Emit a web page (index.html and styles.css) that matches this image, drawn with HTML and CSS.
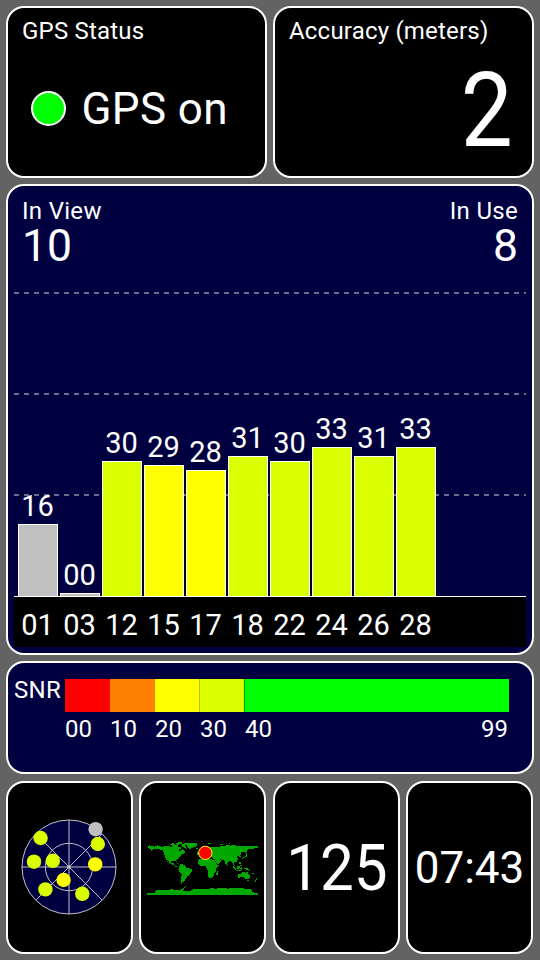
FILE: index.html
```html
<!DOCTYPE html>
<html lang="en">
<head>
<meta charset="utf-8">
<title>GPS Status</title>
<link rel="stylesheet" href="styles.css">
</head>
<body>
<main class="screen">
  <div class="row top">
    <section class="card">
      <h2 class="label">GPS Status</h2>
      <div class="status"><span class="led"></span><span class="status-text">GPS on</span></div>
    </section>
    <section class="card">
      <h2 class="label wide">Accuracy (meters)</h2>
      <div class="accuracy">2</div>
    </section>
  </div>

  <section class="card navy satellites">
    <div class="counts">
      <div><h2 class="count-label">In View</h2><div class="count">10</div></div>
      <div class="right"><h2 class="count-label">In Use</h2><div class="count">8</div></div>
    </div>
    <div class="chart">
      <svg class="grid" viewBox="0 0 512 304" width="512" height="304" aria-hidden="true">
        <path d="M0 1H512M0 102H512M0 203H512"/>
      </svg>
      <div class="bars">
        <div class="col"><span>16</span><i class="bar gray" style="height:72px"></i></div>
        <div class="col"><span>00</span><i class="bar gray" style="height:3px"></i></div>
        <div class="col"><span>30</span><i class="bar lime" style="height:135px"></i></div>
        <div class="col"><span>29</span><i class="bar yellow" style="height:131px"></i></div>
        <div class="col"><span>28</span><i class="bar yellow" style="height:126px"></i></div>
        <div class="col"><span>31</span><i class="bar lime" style="height:140px"></i></div>
        <div class="col"><span>30</span><i class="bar lime" style="height:135px"></i></div>
        <div class="col"><span>33</span><i class="bar lime" style="height:149px"></i></div>
        <div class="col"><span>31</span><i class="bar lime" style="height:140px"></i></div>
        <div class="col"><span>33</span><i class="bar lime" style="height:149px"></i></div>
      </div>
    </div>
    <div class="ids">
      <span>01</span><span>03</span><span>12</span><span>15</span><span>17</span><span>18</span><span>22</span><span>24</span><span>26</span><span>28</span>
    </div>
  </section>

  <section class="card navy snr">
    <div class="snr-label">SNR</div>
    <div class="scale">
      <div class="segments"><i class="red"></i><i class="orange"></i><i class="yellow"></i><i class="lime"></i><i class="green"></i></div>
      <div class="ticks"><span>00</span><span>10</span><span>20</span><span>30</span><span>40</span><span class="last">99</span></div>
    </div>
  </section>

  <div class="row bottom">
    <section class="card tile">
      <svg class="sky" viewBox="-48 -48 96 96" width="96" height="96" aria-label="Sky view">
        <circle r="47" fill="#000040"/>
        <g fill="none" stroke="#c0c0c8" stroke-width="1">
          <circle r="47"/><circle r="23.7"/>
          <path d="M-47 0H47M0 -47V47M-33 -33L33 33M33 -33L-33 33"/>
        </g>
        <circle r="1.8" fill="#c0c0c8"/>
        <g fill="#daff00">
          <circle cx="-28.4" cy="-29" r="7.2"/><circle cx="28.8" cy="-23" r="7.2"/>
          <circle cx="-35" cy="-5.3" r="7.2"/><circle cx="-16.2" cy="-6.2" r="7.2"/>
          <circle cx="-23.6" cy="22.4" r="7.2"/><circle cx="13.3" cy="26.8" r="7.2"/>
        </g>
        <g fill="#ffff00"><circle cx="26.2" cy="-2.6" r="7.2"/><circle cx="-5.4" cy="13" r="7.2"/></g>
        <circle cx="26.6" cy="-37.8" r="7.2" fill="#c0c0c0"/>
      </svg>
    </section>
    <section class="card tile">
      <svg class="map" viewBox="20 30 336 168" width="112" height="56" aria-label="World map">
        <g fill="#00a800">
          <path d="M21 48L26 46L44 50L52 46L64 50L78 48L92 50L108 48L114 52L122 50L124 54L116 58L118 64L126 58L132 64L137 66L133 70L124 73L120 78L115 82L108 90L109 97L105 94L94 93L92 97L95 101L101 99L101 104L107 108L114 112L106 110L97 105L88 99L82 91L77 86L73 78L72 70L68 62L58 58L48 58L40 58L32 65L34 60L26 56L24 52Z"/>
          <path d="M88 41L100 40L104 45L114 47L112 50L102 47L90 46ZM104 38L126 37L124 42L112 44ZM118 44L130 43L136 50L140 56L132 54L124 49Z"/>
          <path d="M130 40L146 38L166 39L172 42L167 50L158 52L151 56L147 57L142 51L139 44L131 44Z"/>
          <path d="M165 53L173 53L172 57L166 57ZM103 97L112 99L117 102L110 101Z"/>
          <path d="M118 104L124 102L134 106L138 113L148 115L155 119L155 124L150 129L149 135L142 138L139 145L133 149L132 155L126 157L126 164L121 163L121 152L123 141L124 134L117 126L114 119L117 112Z"/>
          <path d="M180 60L188 52L201 49L211 52L224 50L232 52L244 47L256 48L258 44L270 47L282 45L292 48L308 47L320 49L354 48L354 53L342 54L338 59L330 56L318 60L322 64L316 70L312 64L303 66L302 72L300 76L302 80L296 82L294 77L290 79L293 87L289 95L281 98L282 104L286 109L280 106L276 98L270 93L262 97L260 106L256 102L252 92L244 89L237 88L243 92L238 99L231 103L224 91L228 90L219 86L214 80L207 82L204 85L196 78L188 82L179 86L177 79L184 76L179 68Z"/>
          <path d="M179 87L195 84L198 88L212 88L223 91L230 104L236 104L234 110L227 117L226 127L221 132L219 140L211 144L205 143L202 132L203 122L198 113L195 107L184 108L177 106L172 99L173 92Z"/>
          <path d="M231 125L234 122L233 133L229 138L228 131ZM170 65H176V75H170ZM202 39L214 40L208 43L202 42ZM238 43L248 41L252 42L241 46ZM267 40L274 42L268 43ZM312 80L318 75L317 70L321 71L319 80L312 84L307 87L305 84ZM261 105H264V109H261Z"/>
          <path d="M276 107L286 114L288 120L280 116ZM289 111L297 105L299 112L295 117L289 115ZM299 113L306 111L304 119L299 118ZM290 121L302 121L301 123L289 123ZM310 113L320 114L328 119L330 123L320 120L311 117ZM297 97H301V103H297ZM300 104H305V108H300Z"/>
          <path d="M293 134L303 130L306 126L314 126L315 130L321 124L324 130L330 138L328 144L323 148L315 146L310 141L301 142L294 144ZM321 149H325V153H321ZM347 145L351 146L345 156L342 153L346 150ZM335 128H341V131H335Z"/>
          <path d="M21 188H44L42 182L55 181L58 179L78 180L92 178L118 180L129 176L132 170L136 168L135 173L130 178L128 184H147L158 178L176 176L200 177L216 174L226 177L240 173L262 176L276 174L296 175L324 176L336 180L334 185L344 188H354V195H21Z"/>
          <path d="M126 176H130V179H126ZM104 95H112V97H104ZM78 83L82 93L85 96L83 97L78 90Z"/>
        </g>
        <circle class="here" cx="195" cy="68.5" r="20"/>
      </svg>
    </section>
    <section class="card tile"><span class="speed">125</span></section>
    <section class="card tile"><span class="clock">07:43</span></section>
  </div>
</main>
</body>
</html>
```

FILE: styles.css
```css
* { box-sizing: border-box; }
body {
  margin: 0;
  background: #636363;
  color: #fff;
  font-family: Roboto, "Liberation Sans", sans-serif;
}
h2, i { margin: 0; font-weight: 400; font-style: normal; }
.screen {
  width: 540px;
  height: 960px;
  padding: 6px;
  display: flex;
  flex-direction: column;
  gap: 6px;
}
.row { display: grid; }
.top { grid-template-columns: 261px 261px; gap: 6px; height: 172px; }
.bottom { grid-template-columns: 127px 127px 127px 128px; column-gap: 6px; height: 173px; margin-top: 1px; }
.bottom .card:nth-child(n+3) { margin-left: 1px; margin-right: -1px; }
.bottom .card:nth-child(4) { margin-right: 0; }
.card {
  background: #000;
  border: 2px solid #fff;
  border-radius: 18px;
  overflow: hidden;
}
.navy { background: #000040; }
.label { font-size: 24px; line-height: 28px; padding: 9px 0 0 14px; letter-spacing: 0.2px; white-space: nowrap; }
.status { display: flex; align-items: center; gap: 16px; padding: 32px 0 0 22.5px; }
.led { width: 35px; height: 35px; border-radius: 50%; border: 2px solid #fff; background: #0f0; }
.status-text { font-size: 44px; line-height: 60px; padding-top: 2px; letter-spacing: 0.4px; }
.accuracy { font-size: 104px; line-height: 122px; padding: 5px 19px 0 0; text-align: right; transform: scaleX(0.89); transform-origin: 235px 50%; }

.satellites { height: 471px; padding: 0 6px; }
.counts { display: flex; justify-content: space-between; padding: 11px 8px 0; height: 106px; }
.count-label { font-size: 24px; line-height: 28px; letter-spacing: 0.3px; }
.count { font-size: 44.5px; line-height: 46px; margin-top: -2px; }
.right { text-align: right; }
.chart { display: grid; height: 304px; }
.grid { grid-area: 1 / 1; fill: none; stroke: #6c6c8c; stroke-width: 2; stroke-dasharray: 5 5; }
.bars { grid-area: 1 / 1; z-index: 1; display: flex; align-items: flex-end; gap: 2px; padding-left: 4px; }
.col { width: 40px; display: flex; flex-direction: column; align-items: center; font-size: 29px; line-height: 36px; }
.col span { margin-right: 1px; }
.bar { width: 40px; border: 1px solid #fff; border-bottom: 0; }
.ids {
  display: flex; gap: 2px; height: 51px; padding-left: 3.5px;
  background: #000; border-top: 1px solid #fff;
  font-size: 29px; line-height: 57px;
}
.ids span { width: 40px; text-align: center; }
.gray { background: #c0c0c0; }
.lime { background: #daff00; }
.yellow { background: #ff0; }
.red { background: #f00; }
.orange { background: #ff8000; }
.green { background: #0f0; }

.snr { height: 113px; display: flex; padding: 16px 0 0 6px; }
.snr-label { width: 51px; font-size: 24px; line-height: 22px; letter-spacing: 0.3px; }
.scale { width: 444px; }
.segments { display: grid; grid-template-columns: 45px 45px 44px 45px 1fr; height: 33px; }
.segments .lime { border-left: 1px solid #b8c000; }
.segments .green { border-left: 1px solid #00a010; }
.ticks { display: grid; grid-template-columns: repeat(5, 45px) 1fr; font-size: 24px; line-height: 34px; }
.last { text-align: right; padding-right: 1px; }

.tile { display: flex; align-items: center; justify-content: center; }
.sky { margin: -1px 1px 0 0; }
.map { shape-rendering: crispEdges; margin-left: 1px; }
.here { fill: #f00; stroke: #ff0; stroke-width: 3; shape-rendering: geometricPrecision; }
.speed { font-size: 64px; padding-top: 2px; transform: scaleX(0.94); }
.clock { font-size: 44px; padding-top: 1px; }
```
